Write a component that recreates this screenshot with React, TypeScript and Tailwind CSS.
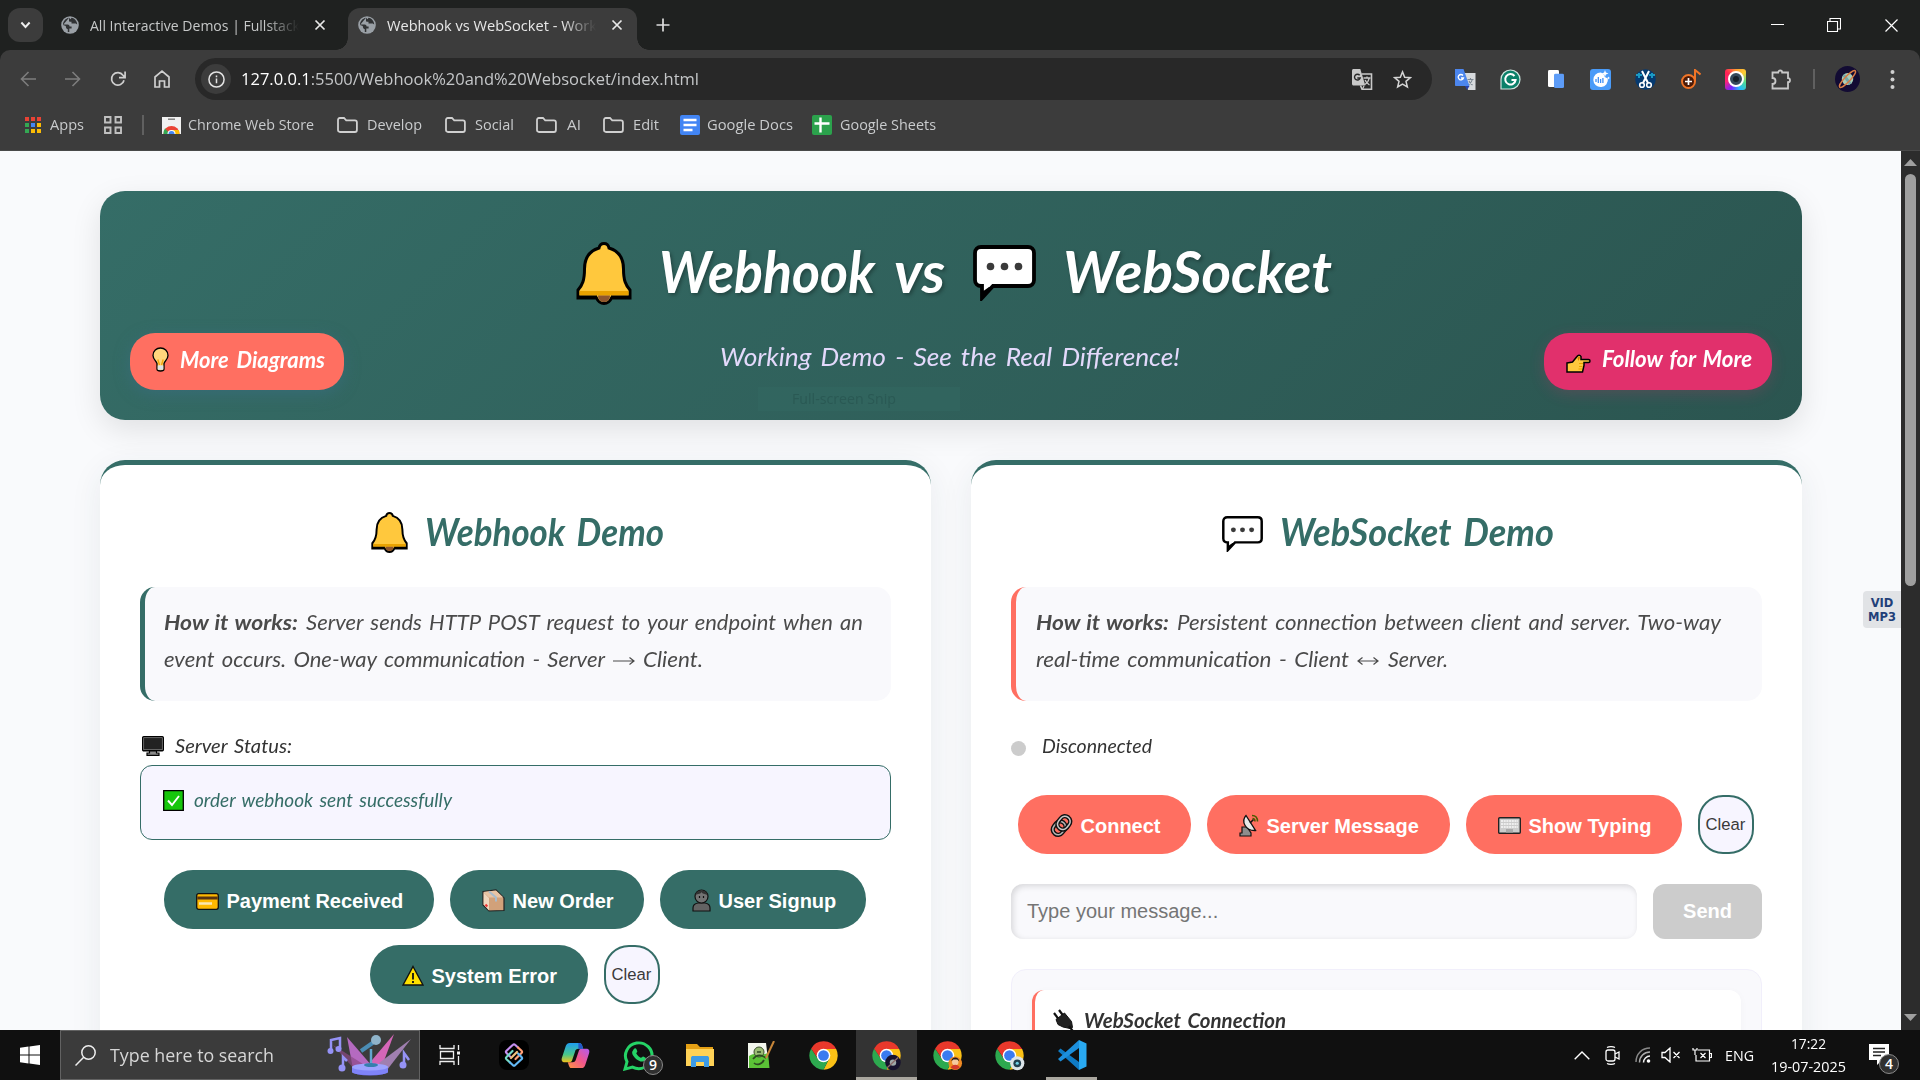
import { useLayoutEffect, useRef, useState } from "react";
import type { ReactNode } from "react";

const UI = "font-['Open_Sans','Noto_Sans',sans-serif]";
const HAND = "font-['Lato',sans-serif] italic";
const ARIAL = "font-['Liberation_Sans',Arial,sans-serif]";

/* Stretches a single line of text to the width of its box. */
function Fit({ className = "", children }: { className?: string; children: ReactNode }) {
  const box = useRef<HTMLSpanElement>(null);
  const text = useRef<HTMLSpanElement>(null);
  const [k, setK] = useState(1);
  useLayoutEffect(() => {
    if (box.current && text.current && text.current.offsetWidth) {
      setK(box.current.getBoundingClientRect().width / text.current.getBoundingClientRect().width);
    }
  }, []);
  return (
    <span ref={box} className={"block shrink-0 whitespace-nowrap " + className}>
      <span ref={text} className="inline-block origin-left" style={{ transform: `scaleX(${k})` }}>
        {children}
      </span>
    </span>
  );
}

function Svg({ box, className, children }: { box: string; className: string; children: ReactNode }) {
  return (
    <svg viewBox={box} className={"block shrink-0 " + className} fill="none" preserveAspectRatio="none">
      {children}
    </svg>
  );
}

const Globe = ({ className = "" }: { className?: string }) => (
  <Svg box="0 0 18 18" className={"h-[18px] w-[18px] " + className}>
    <circle cx="9" cy="9" r="8.8" fill="#9aa0a6" />
    <path d="M8 1.8C4.500 2.500 2 5.400 2 8.400h4.600c1.500 0 2 1 2 2h2v2.200H8.300v3.400c-.6.100-1 .1-1.500 0v-2.700c-1.800-.5-2-2.200-2-3.200L2 8.900M8 1.800v2.900c0 1.200 1.200 1.100 2.500 1.100v1.700h3.800c.9 0 1.500.6 1.900 1.300.1-3.300-2.400-6.500-5.700-7L9.500 3.200 8 1.800z" fill="#303234" />
  </Svg>
);
const Cross = ({ className = "" }: { className?: string }) => (
  <Svg box="0 0 12 12" className={"h-3 w-3 " + className}>
    <path d="M1.500 1.500l9 9m0-9l-9 9" stroke="#e8e8e8" strokeWidth="1.700" />
  </Svg>
);
const Bell = ({ className }: { className: string }) => (
  <Svg box="0 0 56 63" className={className}>
    <path d="M28 1.500c3 0 4.500 2 5 4.500C43 9 47.500 17 47.500 27c0 11 2 16 6.500 21v8H35.500c-1.500 3.500-4 5.500-7.500 5.500S22 59.500 20.500 56H2v-8c4.500-5 6.500-10 6.500-21C8.500 17 13 9 23 6c.5-2.500 2-4.500 5-4.500z" fill="#ffc83d" stroke="#000" strokeWidth="3" />
    <path d="M3.500 49h49v4.500h-49z" fill="#e9a200" />
    <path d="M3 53.500h18V56H3zM35 53.500h18V56H35z" fill="#000" />
    <path d="M22 53.500h12c0 4-2.500 6.500-6 6.500s-6-2.500-6-6.500z" fill="#8e562e" />
  </Svg>
);
const Bubble = ({ className }: { className: string }) => (
  <Svg box="0 0 63 56" className={className}>
    <path d="M8 2h47c3.500 0 6 2.500 6 6v27c0 3.500-2.500 6-6 6H20L9 53V41H8c-3.500 0-6-2.500-6-6V8c0-3.500 2.500-6 6-6z" fill="#fff" stroke="#000" strokeWidth="3.800" />
    <path d="M9 47v7l11-12h-4z" fill="#000" />
    <g fill="#3a3a3a"><circle cx="17.500" cy="21.500" r="3.800" /><circle cx="31.500" cy="21.500" r="3.800" /><circle cx="45.500" cy="21.500" r="3.800" /></g>
  </Svg>
);
const Chrome = ({ className = "", children }: { className?: string; children?: ReactNode }) => (
  <Svg box="0 0 48 48" className={"h-[31px] w-[31px] " + className}>
    <path d="M24 14H43.600A22 22 0 0 1 24 46L32.660 29z" fill="#fbc116" />
    <path d="M4.950 13A22 22 0 0 0 24 46L32.660 29 15.340 29z" fill="#2da94f" />
    <path d="M24 14H43.600A22 22 0 0 0 4.950 13L15.340 29z" fill="#e8382b" />
    <circle cx="24" cy="24" r="10.500" fill="#fff" />
    <circle cx="24" cy="24" r="8.300" fill="#3a7bf0" />
    {children}
  </Svg>
);
const Folder = ({ className = "" }: { className?: string }) => (
  <Svg box="0 0 21 16" className={"h-4 w-[21px] " + className}>
    <path d="M1 3c0-1.200.7-2 1.800-2H7l2.200 2.300h8.700c1.200 0 2 .8 2 2V13c0 1.200-.8 2-2 2H3c-1.200 0-2-.8-2-2z" stroke="#d0d0d0" strokeWidth="1.800" />
  </Svg>
);

function TabStrip() {
  return (
    <div className={"flex h-[50px] items-center bg-[#1f2120] text-[15px] leading-[20px] text-[#c6c8c8] " + UI}>
      <div className="ml-2 flex h-[34px] w-[35px] items-center justify-center rounded-[12px] bg-[#3c3c3c]">
        <Svg box="0 0 12 8" className="h-[8px] w-[11px]"><path d="M1.500 1.500L6 6l4.500-4.500" stroke="#eee" strokeWidth="2.200" /></Svg>
      </div>
      <Globe className="ml-[18px]" />
      <div className="ml-[11px] w-[209px] [mask-image:linear-gradient(to_right,#000_84%,transparent)]">
        <Fit className="w-[210px]">All Interactive Demos | Fullstack</Fit>
      </div>
      <Cross className="ml-[15px]" />
      <div className="relative ml-[22px] mt-2 flex h-[42px] w-[289px] items-center rounded-t-[12px] bg-[#3c3c3c] pb-2 text-[#e8e8e8]">
        <span className="absolute bottom-0 -left-3 h-3 w-3 bg-[radial-gradient(circle_at_0_0,transparent_11.500px,#3c3c3c_12px)]" />
        <span className="absolute -right-3 bottom-0 h-3 w-3 bg-[radial-gradient(circle_at_100%_0,transparent_11.500px,#3c3c3c_12px)]" />
        <Globe className="ml-[10px]" />
        <div className="ml-[11px] w-[209px] [mask-image:linear-gradient(to_right,#000_84%,transparent)]">
          <Fit className="w-[210px]">Webhook vs WebSocket - Work</Fit>
        </div>
        <Cross className="ml-[15px]" />
      </div>
      <Svg box="0 0 14 14" className="ml-[19px] h-[14px] w-[14px]"><path d="M7 .5v13M.5 7h13" stroke="#ddd" strokeWidth="1.700" /></Svg>
      <Svg box="0 0 13 13" className="ml-auto h-[13px] w-[13px]"><path d="M0 5.500h13" stroke="#fff" /></Svg>
      <Svg box="0 0 14 14" className="ml-[43px] h-[14px] w-[14px]"><path d="M.5 3.500h10v10H.5zM3 3.500V.5h10.500v10.500h-3" stroke="#fff" strokeWidth="1.100" /></Svg>
      <Svg box="0 0 13 13" className="mr-[22px] ml-[44px] h-[13px] w-[13px]"><path d="M.5.5l12 12m0-12l-12 12" stroke="#fff" strokeWidth="1.200" /></Svg>
    </div>
  );
}

function Toolbar() {
  return (
    <div className={"flex h-[58px] items-center text-[17px] " + UI}>
      <Svg box="0 0 16 16" className="ml-5 h-4 w-4"><path d="M16 8H1.500M8.500 1L1.500 8l7 7" stroke="#7d7d7d" strokeWidth="1.600" /></Svg>
      <Svg box="0 0 16 16" className="ml-[29px] h-4 w-4"><path d="M0 8h14.500M7.500 1l7 7-7 7" stroke="#7d7d7d" strokeWidth="1.600" /></Svg>
      <Svg box="0 0 16 16" className="ml-[29px] h-4 w-4"><path d="M14 9.200A6.300 6.300 0 1 1 13 4.200L15 6.500M15.100.500v6.200H9" stroke="#cfcfcf" strokeWidth="1.700" /></Svg>
      <Svg box="0 0 16 18" className="ml-[28px] h-[18px] w-4"><path d="M1 7l7-5.800L15 7v10h-4.500v-6h-5v6H1z" stroke="#cfcfcf" strokeWidth="1.700" /></Svg>
      <div className="ml-[25px] flex h-[42px] w-[1237px] items-center rounded-full bg-[#282828]">
        <div className="ml-[6px] flex h-[30px] w-[30px] items-center justify-center rounded-full bg-[#3c3c3c]">
          <Svg box="0 0 18 18" className="h-[17px] w-[17px]"><circle cx="9" cy="9" r="8" stroke="#e3e3e3" strokeWidth="1.600" /><path d="M9 8v5M9 4.800v1.900" stroke="#e3e3e3" strokeWidth="1.600" /></Svg>
        </div>
        <Fit className="ml-[10px] w-[458px] text-[#c4c6c8]"><span className="text-white">127.0.0.1</span>:5500/Webhook%20and%20Websocket/index.html</Fit>
        <Svg box="0 0 21 21" className="ml-auto h-[21px] w-[21px]">
          <path d="M9.500 5h10v15.200H10L8.500 16.500" stroke="#c8c8c8" strokeWidth="1.600" />
          <path d="M0 1.500C0 .7.700 0 1.500 0h6.800l5 16.500H1.500C.7 16.500 0 15.800 0 15z" fill="#c8c8c8" />
          <path d="M7.700 6.300A2.900 2.900 0 1 0 8.200 9H5.300" stroke="#282828" strokeWidth="1.400" />
          <path d="M11.500 9h7M15 7.500V9m2.200 0c-.6 3.200-2.600 5.500-4.400 6.500m.3-4.500c.8 2 2.600 4 4.400 5M12 17l-1.500 3" stroke="#c8c8c8" strokeWidth="1.300" />
        </Svg>
        <Svg box="0 0 20 20" className="mr-[20px] ml-[20px] h-[19px] w-[19px]"><path d="M10 2l2.300 5.600 6 .5-4.600 3.900 1.400 5.900L10 14.800l-5.100 3.100L6.300 12 1.700 8.100l6-.5z" stroke="#d4d4d4" strokeWidth="1.600" /></Svg>
      </div>
      <Svg box="0 0 21 21" className="ml-[23px] h-[21px] w-[21px]">
        <path d="M8 4h12.500v17H13z" fill="#d7dadd" /><path d="M0 0h8.500l6 17H1c-.6 0-1-.4-1-1z" fill="#4c86ee" /><path d="M10 17h4.500L12 21z" fill="#2740a8" />
        <path d="M8 6.500A2.700 2.700 0 1 0 8.500 9H6" stroke="#fff" strokeWidth="1.300" /><path d="M12.500 10.500h6M15.500 9v1.500m1.800 0c-.5 2.500-2 4-3.300 5m0-3.500c.8 1.800 2 3 3.500 4" stroke="#7c8792" strokeWidth="1.100" />
      </Svg>
      <Svg box="0 0 21 21" className="ml-[24px] h-[21px] w-[21px]">
        <path d="M1 20V10.500A9.500 9.500 0 1 1 10.500 20z" fill="#0b8069" stroke="#cfe5df" strokeWidth="1.200" /><path d="M14.500 7A5.200 5.200 0 1 0 15.600 11H11.500" stroke="#fff" strokeWidth="2" />
      </Svg>
      <Svg box="0 0 16 20" className="ml-[27px] h-[19px] w-4"><rect width="11" height="18" rx="1.500" fill="#fff" /><rect x="6" y="4" width="10" height="15" rx="1.500" fill="#5d9cf7" /></Svg>
      <Svg box="0 0 21 21" className="ml-[26px] h-[21px] w-[21px]">
        <rect width="21" height="21" rx="3" fill="#4a9bf8" /><path d="M11 3.500a7.300 7.300 0 1 0 6.800 6l-3-1.500-1-2.500z" fill="#fff" /><path d="M6 10v3m2.300-5v6m2.300-4v4m2.300-5v5" stroke="#3f8ff5" strokeWidth="1.300" /><path d="M15 1l.9 2.600 2.600.9-2.600.9L15 8l-.9-2.600-2.600-.9 2.600-.9zM18.500 7.500l.5 1 1 .5-1 .5-.5 1-.5-1-1-.5 1-.5z" fill="#fff" />
      </Svg>
      <Svg box="0 0 21 21" className="ml-[24px] h-[21px] w-[21px]">
        <circle cx="10.500" cy="10.500" r="10.300" fill="#063a70" /><path d="M2 7v-2m2 4V4m2 3V5m9 2V5m2 4V4m2 3V5" stroke="#23c3e8" strokeWidth="1.400" /><path d="M7 2l6 12M14 2L8 14" stroke="#fff" strokeWidth="2" /><circle cx="7" cy="16" r="2.300" stroke="#fff" strokeWidth="1.600" /><circle cx="14" cy="16" r="2.300" stroke="#fff" strokeWidth="1.600" />
      </Svg>
      <Svg box="0 0 20 20" className="ml-[25px] h-5 w-5">
        <circle cx="7.500" cy="12.500" r="6.500" fill="#4a1a08" stroke="#f07427" strokeWidth="2" /><path d="M14 12V1l5.500 4.500" stroke="#f07427" strokeWidth="2" /><path d="M7.500 9v7M4 12.500h7" stroke="#fff" strokeWidth="1.700" />
      </Svg>
      <div className="ml-6 flex h-[21px] w-[21px] items-center justify-center rounded-[3px] bg-[conic-gradient(#f93,#fc3,#5d8,#2bf,#72f,#f27,#f25,#f93)]">
        <span className="flex h-[16px] w-[16px] items-center justify-center rounded-full border-2 border-white bg-[#34495c]"><span className="h-[6px] w-[6px] rounded-full bg-[#15202a]" /></span>
      </div>
      <Svg box="0 0 21 21" className="ml-[25px] h-[21px] w-[21px]"><path d="M2 3.500h5.200a2 2 0 1 1 4 0H17v5.700a2 2 0 1 1 0 4v6.300H1.500v-4.500a3 3 0 0 0 0-6V3.500z" stroke="#c8c8c8" strokeWidth="1.800" /></Svg>
      <span className="ml-[21px] h-5 w-[2px] bg-[#606060]" />
      <Svg box="0 0 26 26" className="ml-[20px] h-[26px] w-[25px]">
        <circle cx="13" cy="13" r="13" fill="#120b33" /><circle cx="13" cy="13" r="6" fill="#a9cdb8" /><path d="M9 9l7 9" stroke="#73a7aa" strokeWidth="3" /><ellipse cx="13" cy="13" rx="11.500" ry="2.800" transform="rotate(-45 13 13)" stroke="#d97b44" strokeWidth="1.500" />
      </Svg>
      <Svg box="0 0 5 21" className="ml-[30px] h-[21px] w-[5px]"><g fill="#d0d0d0"><circle cx="2.500" cy="3" r="2" /><circle cx="2.500" cy="10.500" r="2" /><circle cx="2.500" cy="18" r="2" /></g></Svg>
    </div>
  );
}

function Bookmarks() {
  return (
    <div className={"flex h-[34px] items-center text-[15px] leading-[20px] text-[#c9cbcd] " + UI}>
      <div className="ml-[25px] grid w-4 grid-cols-3 gap-[2px]">
        {["bg-[#e94335]", "bg-[#e94335]", "bg-[#e94335]", "bg-[#34a853]", "bg-[#4285f4]", "bg-[#fbbc05]", "bg-[#34a853]", "bg-[#fbbc05]", "bg-[#fbbc05]"].map((c, i) => (
          <span key={i} className={"h-[4px] w-[4px] " + c} />
        ))}
      </div>
      <Fit className="ml-[9px] w-[34px] pb-[2px]">Apps</Fit>
      <Svg box="0 0 18 18" className="ml-[20px] h-[18px] w-[18px]"><path d="M1 1h5.500v5.500H1zM11.500 1H17v5.500h-5.500zM1 11.500h5.500V17H1zM11.500 11.500H17V17h-5.500z" stroke="#c0c0c0" strokeWidth="1.900" /></Svg>
      <span className="ml-[20px] h-5 w-[2px] bg-[#606060]" />
      <Svg box="0 0 19 17" className="ml-[18px] h-[17px] w-[19px]">
        <path d="M0 0h19v17H0z" fill="#f1f1f1" /><path d="M6 2.200h7" stroke="#777" strokeWidth="1.400" /><path d="M1.500 17a8 8 0 0 1 16 0z" fill="#ea4335" /><path d="M1.500 17A8 8 0 0 1 3 11.500L8 17z" fill="#34a853" /><path d="M17.500 17a8 8 0 0 0-.9-4H10v4z" fill="#fbbc05" /><path d="M5.500 17a4 4 0 0 1 8 0z" fill="#fff" /><path d="M6.500 17a3 3 0 0 1 6 0z" fill="#4285f4" />
      </Svg>
      <Fit className="ml-[7px] w-[126px] pb-[2px]">Chrome Web Store</Fit>
      <Folder className="ml-[23px]" />
      <Fit className="ml-[9px] w-[55px] pb-[2px]">Develop</Fit>
      <Folder className="ml-[23px]" />
      <Fit className="ml-[9px] w-[39px] pb-[2px]">Social</Fit>
      <Folder className="ml-[22px]" />
      <Fit className="ml-[10px] w-[14px] pb-[2px]">AI</Fit>
      <Folder className="ml-[22px]" />
      <Fit className="ml-[9px] w-[26px] pb-[2px]">Edit</Fit>
      <Svg box="0 0 20 20" className="ml-[21px] h-5 w-5"><rect width="20" height="20" rx="2" fill="#4285f4" /><path d="M3.500 5h13M3.500 10h13M3.500 15h9" stroke="#fff" strokeWidth="2.400" /></Svg>
      <Fit className="ml-[7px] w-[86px] pb-[2px]">Google Docs</Fit>
      <Svg box="0 0 20 20" className="ml-[19px] h-5 w-5"><rect width="20" height="20" rx="2" fill="#2ba24c" /><path d="M8.500 2.500v15M2.500 8.500h15" stroke="#fff" strokeWidth="2.400" /></Svg>
      <Fit className="ml-[8px] w-[96px] pb-[2px]">Google Sheets</Fit>
    </div>
  );
}

function Banner() {
  return (
    <header className={"relative flex h-[229px] flex-col rounded-[25px] bg-linear-135 from-[#356d67] to-[#2b5550] pt-[40px] text-white shadow-[0_10px_30px_rgba(0,0,0,0.1)] " + HAND}>
      <h1 className="flex h-[84px] items-center pl-[476px] text-[58px] leading-[60px] font-bold [text-shadow:2px_2px_4px_rgba(0,0,0,0.3)]">
        <Bell className="h-[63px] w-[56px]" />
        <Fit className="ml-[27px] w-[216px] pb-[5px]">Webhook</Fit>
        <Fit className="ml-[19px] w-[51px] pb-[5px]">vs</Fit>
        <Bubble className="ml-[28px] h-[56px] w-[63px]" />
        <Fit className="ml-[27px] w-[269px] pb-[5px]">WebSocket</Fit>
      </h1>
      <div className="mt-[18px] flex h-[57px] items-center px-[30px]">
        <div className="flex h-[57px] w-[214px] items-center rounded-[25px] bg-[#ff6f61] pb-[4px] text-[22.500px] leading-[26px] font-bold shadow-[0_4px_15px_rgba(59,110,130,0.6)]">
          <Svg box="0 0 17 25" className="ml-[22px] h-[25px] w-[17px]">
            <path d="M8.500 1C4.500 1 1 4 1 8.500c0 3.500 3 5 4 8v5.500c0 1.200 1.500 2 3.500 2s3.500-.8 3.500-2v-5.500c1-3 4-4.500 4-8C16 4 12.500 1 8.500 1z" fill="#ffd67d" stroke="#000" strokeWidth="1.300" />
            <path d="M5.800 12.500l1.700 5.500m3.700-5.500L9.500 18" stroke="#f5a50a" strokeWidth="1.400" /><path d="M5.700 18.500h5.600v4.200H5.700z" fill="#dfe3e6" />
          </Svg>
          <Fit className="ml-[11px] w-[145px] [word-spacing:3px]">More Diagrams</Fit>
        </div>
        <Fit className="ml-[376px] w-[460px] pb-[12px] text-[26px] leading-[30px] text-[#e3d9fb] [word-spacing:3px]">Working Demo - See the Real Difference!</Fit>
        <div className="ml-[364px] flex h-[57px] w-[228px] items-center rounded-[25px] bg-[#e1306c] text-[22.500px] leading-[26px] font-bold shadow-[0_4px_15px_rgba(225,48,108,0.2)]">
          <Svg box="0 0 25 19" className="mt-[3px] ml-[22px] h-[19px] w-[25px]">
            <path d="M1 9l5.500-1L11 2.500c1-1.500 3-1.800 4 0V5.500h7.500c2 0 2 3 0 3H18v3l-1.500 6.500H1z" fill="#ffc83d" stroke="#000" strokeWidth="1.500" /><path d="M11.500 4c1-1.500 2.300-1.500 2.500-.5L12.500 7z" fill="#d67d00" /><path d="M13 9.500h4M13 12.500h3.500M12.500 15h3.500" stroke="#e9a200" />
          </Svg>
          <Fit className="ml-[11px] w-[150px] pb-[5px] [word-spacing:2px]">Follow for More</Fit>
        </div>
      </div>
      <div className={"absolute top-[196px] left-[658px] h-[24px] w-[202px] bg-[#356b65]/40 pl-[34px] text-[14px] leading-[24px] text-[#2a5954] not-italic " + UI}>
        <Fit className="w-[104px]">Full-screen Snip</Fit>
      </div>
    </header>
  );
}

function Card({ children }: { children: ReactNode }) {
  return (
    <section className="h-[900px] w-[831px] shrink-0 rounded-[25px] border-t-[5px] border-[#356d67] bg-white px-[40px] pt-[40px] shadow-[0_8px_32px_rgba(40,60,80,0.08)]">
      {children}
    </section>
  );
}

function Pill({ className, children }: { className: string; children: ReactNode }) {
  return (
    <button className={"flex h-[59px] shrink-0 items-center rounded-[29px] pt-[2px] text-[20px] font-bold whitespace-nowrap text-white " + ARIAL + " " + className}>
      {children}
    </button>
  );
}

const Clear = () => (
  <button className={"flex h-[59px] w-[56px] shrink-0 items-center justify-center rounded-[25px] border-2 border-[#356d67] bg-[#f7f5ff] text-[16.670px] text-[#3a3a3a] " + ARIAL}>Clear</button>
);

function WebhookCard() {
  return (
    <Card>
      <h2 className={"flex h-[56px] items-center pl-[231px] text-[38px] leading-[44px] font-bold text-[#356d67] " + HAND}>
        <Bell className="mb-[2px] h-[41px] w-[37px]" />
        <Fit className="ml-[17px] w-[239px] pb-[4px] [word-spacing:4px]">Webhook Demo</Fit>
      </h2>
      <div className={"mt-[26px] h-[114px] w-[751px] rounded-[15px] border-l-[5px] border-[#356d67] bg-[#f9f9fc] pt-[17px] pl-[19px] text-[21.500px] leading-[37px] text-[#4a4a4a] " + HAND}>
        <div className="flex">
          <Fit className="w-[134px] font-bold [word-spacing:1px]">How it works:</Fit>
          <Fit className="ml-[8px] w-[557px] [word-spacing:2px]">Server sends HTTP POST request to your endpoint when an</Fit>
        </div>
        <div className="flex">
          <Fit className="w-[441px] [word-spacing:2px]">event occurs. One-way communication - Server</Fit>
          <Svg box="0 0 22 10" className="mt-[15px] ml-[8px] h-[10px] w-[22px]"><path d="M0 5h21M16.500 1.500L21 5l-4.500 3.500" stroke="#4a4a4a" strokeWidth="1.200" /></Svg>
          <Fit className="ml-[8px] w-[60px]">Client.</Fit>
        </div>
      </div>
      <div className={"mt-[27px] flex h-[37px] items-center pl-[2px] text-[19px] leading-[24px] text-[#333] " + HAND}>
        <Svg box="0 0 22 20" className="-mt-[1px] h-[20px] w-[22px]"><rect x=".7" y=".7" width="20.600" height="14" rx="1" fill="#222" stroke="#000" strokeWidth="1.400" /><rect x="1.700" y="1.700" width="18.600" height="12" stroke="#888" strokeWidth=".7" /><path d="M7.500 15h7v2h2.500v2.300H5V17h2.500z" fill="#8a8a8a" stroke="#000" strokeWidth="1.200" /></Svg>
        <Fit className="ml-[11px] w-[117px] pb-[2px] [word-spacing:2px]">Server Status:</Fit>
      </div>
      <div className={"flex h-[75px] w-[751px] items-center rounded-[12px] border border-[#356d67] bg-[#f7f5ff] pb-[5px] pl-[22px] text-[19px] leading-[24px] text-[#356d67] " + HAND}>
        <Svg box="0 0 21 21" className="h-[21px] w-[21px]"><path d="M.7.7h19.600v19.600H.700z" fill="#16c60c" stroke="#000" strokeWidth="1.300" /><path d="M5 10.500l4 4.500 7-9" stroke="#fff" strokeWidth="1.900" /></Svg>
        <Fit className="ml-[10px] w-[258px] [word-spacing:2px]">order webhook sent successfully</Fit>
      </div>
      <div className="mt-[30px] flex flex-wrap justify-center gap-4 pr-[2px]">
        <Pill className="w-[270px] bg-[#356d67] pl-[32px]">
          <Svg box="0 0 23 17" className="mt-[1px] mr-[8px] h-[17px] w-[23px]"><rect x=".7" y=".7" width="21.600" height="15.600" rx="2" fill="#ffb900" stroke="#111" strokeWidth="1.300" /><path d="M1.300 3.500h20.400v3H1.300z" fill="#5a3411" /><path d="M3 10.500h13" stroke="#fbe7b0" strokeWidth="2.500" /></Svg>
          Payment Received
        </Pill>
        <Pill className="w-[194px] bg-[#356d67] pl-[32px]">
          <Svg box="0 0 23 23" className="mr-[8px] h-[23px] w-[23px]"><path d="M1 2.500L14 1l8 8v12.500L7 22l-6-6z" fill="#d1a17a" stroke="#222" strokeWidth="1.200" /><path d="M1.500 3L7 8.500h14.500L14 1.500z" fill="#e8c4a4" /><path d="M1.600 3.500L7 9v12.500l-5.400-6z" fill="#efd6bd" /><path d="M7 2.500l7 6v4" stroke="#a9bccb" strokeWidth="2" /><path d="M3.500 15.500l1.800 2" stroke="#e33" strokeWidth="2" /></Svg>
          New Order
        </Pill>
        <Pill className="w-[206px] bg-[#356d67] pl-[32px]">
          <Svg box="0 0 19 23" className="mr-[8px] h-[23px] w-[19px]"><path d="M1 22v-3c0-3 2-4.500 5-5h7c3 .5 5 2 5 5v3z" fill="#636363" stroke="#111" strokeWidth="1.200" /><circle cx="9.500" cy="7.500" r="6.500" fill="#737373" stroke="#111" strokeWidth="1.200" /><path d="M3.300 7c1-3 5-1 6.200-4C11 6 14 4 15.700 7 15 2 12 1.500 9.500 1.500S4 2 3.300 7z" fill="#333" /><path d="M7.500 7v2m4-2v2" stroke="#111" strokeWidth="1.200" /></Svg>
          User Signup
        </Pill>
        <Pill className="w-[218px] bg-[#356d67] pl-[32px]">
          <Svg box="0 0 22 21" className="mr-[8px] h-[21px] w-[22px]"><path d="M11 1.500L21 20H1z" fill="#ffe000" stroke="#111" strokeWidth="1.400" /><path d="M11 8v6.500m0 1.500v2" stroke="#111" strokeWidth="1.800" /></Svg>
          System Error
        </Pill>
        <Clear />
      </div>
    </Card>
  );
}

function SocketCard() {
  return (
    <Card>
      <h2 className={"flex h-[56px] items-center pl-[211px] text-[38px] leading-[44px] font-bold text-[#356d67] " + HAND}>
        <Bubble className="mt-[1px] h-[36px] w-[41px]" />
        <Fit className="ml-[17px] w-[274px] pb-[4px] [word-spacing:4px]">WebSocket Demo</Fit>
      </h2>
      <div className={"mt-[26px] h-[114px] w-[751px] rounded-[15px] border-l-[5px] border-[#ff6f61] bg-[#f9f9fc] pt-[17px] pl-[20px] text-[21.500px] leading-[37px] text-[#4a4a4a] " + HAND}>
        <div className="flex">
          <Fit className="w-[133px] font-bold [word-spacing:1px]">How it works:</Fit>
          <Fit className="ml-[8px] w-[544px] [word-spacing:2px]">Persistent connection between client and server. Two-way</Fit>
        </div>
        <div className="flex">
          <Fit className="w-[313px] [word-spacing:2px]">real-time communication - Client</Fit>
          <Svg box="0 0 22 10" className="mt-[15px] ml-[8px] h-[10px] w-[22px]"><path d="M1 5h20M16.500 1.500L21 5l-4.500 3.500M5.500 1.500L1 5l4.500 3.500" stroke="#4a4a4a" strokeWidth="1.200" /></Svg>
          <Fit className="ml-[9px] w-[60px]">Server.</Fit>
        </div>
      </div>
      <div className={"mt-[27px] flex h-[37px] items-center text-[19px] leading-[24px] text-[#333] " + HAND}>
        <span className="mt-[3px] h-[15px] w-[15px] rounded-full bg-[#ccc]" />
        <Fit className="ml-[16px] w-[110px] pb-[2px]">Disconnected</Fit>
      </div>
      <div className="mt-[30px] flex justify-center gap-4 pr-[2px]">
        <Pill className="w-[173px] bg-[#ff6f61] pl-[32px]">
          <Svg box="0 0 23 23" className="mr-[8px] h-[23px] w-[23px]"><g transform="rotate(-52 11.500 11.500)"><rect x="1" y="6" width="14" height="10.500" rx="5.200" stroke="#111" strokeWidth="4.400" /><rect x="1" y="6" width="14" height="10.500" rx="5.200" stroke="#b5b5b5" strokeWidth="1.500" /><rect x="8" y="6.500" width="14" height="10.500" rx="5.200" stroke="#111" strokeWidth="4.400" /><rect x="8" y="6.500" width="14" height="10.500" rx="5.200" stroke="#c9c9c9" strokeWidth="1.500" /></g></Svg>
          Connect
        </Pill>
        <Pill className="w-[243px] bg-[#ff6f61] pl-[32px]">
          <Svg box="0 0 20 23" className="mr-[8px] h-[23px] w-[20px]"><path d="M3 13h5l4 6v3H1v-3h2z" fill="#8d8d8d" stroke="#111" strokeWidth="1.200" /><path d="M7 1.500C2 7 6 17 16.500 16.500z" fill="#e8e8e8" stroke="#111" strokeWidth="1.300" /><path d="M11 9l3.500-3.500" stroke="#111" strokeWidth="1.600" /><path d="M13 1.500c3.500 0 5.500 2.500 5.500 6M13.500 4.500c1.500 0 2.500 1 2.500 3" stroke="#4b5a00" strokeWidth="1.500" /></Svg>
          Server Message
        </Pill>
        <Pill className="w-[216px] bg-[#ff6f61] pl-[32px]">
          <Svg box="0 0 23 17" className="mr-[8px] h-[17px] w-[23px]"><rect x=".7" y=".7" width="21.600" height="15.600" rx="1" fill="#ccc" stroke="#222" strokeWidth="1.400" /><path d="M3 4h17M3 7h17M3 10h17" stroke="#eee" strokeWidth="1.800" strokeDasharray="2 .7" /><path d="M8 12h7v3.500H8z" fill="#aaa" /></Svg>
          Show Typing
        </Pill>
        <Clear />
      </div>
      <div className={"mt-[30px] flex h-[55px] gap-4 text-[20px] " + ARIAL}>
        <div className="flex w-[626px] items-center rounded-[12px] bg-[#f9f9fc] pb-[2px] pl-[16px] text-[#757575] shadow-[inset_2px_2px_6px_rgba(0,0,0,0.14)]">Type your message...</div>
        <button className="w-[109px] rounded-[12px] bg-[#ccc] pb-[2px] font-bold text-white">Send</button>
      </div>
      <div className="mt-[30px] h-[300px] w-[751px] rounded-[15px] border border-[#f1effb] bg-[#f9f9fc] px-[20px] pt-[20px]">
        <div className={"flex h-[200px] rounded-[12px] border-l-[3px] border-[#ff6f61] bg-white pt-[17px] pl-[18px] text-[20px] leading-[26px] font-bold text-[#333] shadow-[0_2px_8px_rgba(0,0,0,0.03)] " + HAND}>
          <Svg box="0 0 22 24" className="mt-[2px] h-[24px] w-[22px]"><path d="M1 4l4.500 6M6 1l4.500 6" stroke="#111" strokeWidth="2.200" /><path d="M3 10.500l8.500-6.500 7 8.500 1 6-2.500 1-7-1.500-5-2.500z" fill="#222" stroke="#111" strokeWidth="1" /><path d="M16 17l4.500 6" stroke="#111" strokeWidth="2.200" /></Svg>
          <Fit className="ml-[9px] w-[202px] [word-spacing:2px]">WebSocket Connection</Fit>
        </div>
      </div>
    </Card>
  );
}

function Taskbar() {
  return (
    <footer className={"flex h-[50px] items-center bg-[#101010] text-white " + UI}>
      <Svg box="0 0 20 20" className="ml-5 h-5 w-5"><path d="M0 2.800L8.500 1.600v8H0zM9.500 1.400L20 0v9.600H9.500zM0 10.500h8.500v8L0 17.200zM9.500 10.500H20V20L9.500 18.600z" fill="#fff" /></Svg>
      <div className="ml-5 flex h-[50px] w-[360px] items-center border border-[#626262] bg-[#3b3b3b] text-[18px] leading-[24px] text-[#d6d6d6]">
        <Svg box="0 0 21 21" className="ml-[14px] h-[21px] w-[21px]"><circle cx="13.500" cy="7.500" r="6.700" stroke="#eee" strokeWidth="1.500" /><path d="M8.700 12.300L.5 20.500" stroke="#eee" strokeWidth="1.500" /></Svg>
        <Fit className="ml-[14px] w-[164px]">Type here to search</Fit>
        <Svg box="0 0 85 42" className="ml-[53px] h-[42px] w-[85px]">
          <path d="M20 3l25 29-19 3z" fill="#b56ac0" /><path d="M67 0L40 32l14 3z" fill="#d566b8" /><path d="M84 5L52 29l8 7z" fill="#a07fb0" /><path d="M6 11l30 19-8 6z" fill="#8c4a86" opacity=".7" />
          <ellipse cx="43" cy="37" rx="18" ry="4.500" fill="#6f6af0" /><path d="M25 33v5c0 4 36 4 36 0v-5z" fill="#7f83f8" /><ellipse cx="43" cy="33" rx="18" ry="3.500" fill="#9da3ff" />
          <path d="M44 31V15" stroke="#63a7cf" strokeWidth="2.500" /><ellipse cx="44" cy="31" rx="7" ry="2" fill="#357fae" /><path d="M34 17l13-9" stroke="#4b8db5" strokeWidth="4" /><circle cx="49" cy="6" r="5" fill="#8fb4ca" />
          <path d="M4 17V6l9-2v11M16 34V23l4 4M77 31V19l5 7" stroke="#9592f5" strokeWidth="2.500" /><g fill="#9592f5"><circle cx="3.500" cy="17" r="3" /><circle cx="11.500" cy="15" r="3" /><circle cx="15" cy="34" r="3.500" /><circle cx="76" cy="31" r="3.500" /></g>
        </Svg>
      </div>
      <Svg box="0 0 21 20" className="ml-[19px] h-5 w-[21px]"><path d="M1 0v3.500h14V0M1 20v-3.500h14V20M1.500 6.500h13v7h-13zM19.500 0v5m0 6v9" stroke="#eee" strokeWidth="1.300" /><path d="M18 6.500h3v3h-3z" fill="#eee" /></Svg>
      <Svg box="0 0 30 30" className="ml-[39px] h-[30px] w-[30px]"><rect width="30" height="30" rx="8" fill="#000" /><g strokeWidth="2.200" strokeLinejoin="round" strokeLinecap="round"><path d="M11 16.500L7.500 13c-.8-.8-.8-1.500 0-2.300L14 4.800c.7-.7 1.300-.7 2 0L19 7.500" stroke="#c58ff0" /><path d="M19 7.500l3.500 3.300c.8.800.8 1.500 0 2.200L16.500 19" stroke="#ff9d76" /><path d="M13.500 11L7.500 17c-.8.700-.8 1.400 0 2.200l3.500 3.300" stroke="#74d9c8" /><path d="M19 13.500l3.500 3.500c.8.800.8 1.500 0 2.300L16 25.200c-.7.700-1.300.7-2 0l-3-2.700" stroke="#62b8f5" /><path d="M12 18l6-6" stroke="#f2c27f" /></g></Svg>
      <svg viewBox="0 0 30 28" className="ml-[32px] block h-[27px] w-[29px]">
        <defs>
          <linearGradient id="cpA" x1="0" y1="0" x2="0" y2="1"><stop stopColor="#1f9df0" /><stop offset=".6" stopColor="#49c78a" /><stop offset="1" stopColor="#f2c21a" /></linearGradient>
          <linearGradient id="cpB" x1="1" y1="0" x2="0" y2="1"><stop stopColor="#b15bf0" /><stop offset=".5" stopColor="#f2578c" /><stop offset="1" stopColor="#ff9440" /></linearGradient>
        </defs>
        <path d="M9 1h10c2 0 2.500 1.500 3 3l1 3h-5c-2 0-3 1-3.500 3l-3 9c-.5 1.500-1.500 2-3 2H4C1 21 0 19 1 16L5 4c.7-2 2-3 4-3z" fill="url(#cpA)" />
        <path d="M21 27H11c-2 0-2.500-1.500-3-3l-1-3h5c2 0 3-1 3.500-3l3-9c.5-1.500 1.500-2 3-2H26c3 0 4 2 3 5l-4 12c-.7 2-2 3-4 3z" fill="url(#cpB)" />
        <path d="M18 1c2.500 0 3.500 1 4 3l1 3h-5z" fill="#2456c8" />
      </svg>
      <div className="relative ml-[33px] h-[31px] w-[32px]">
        <Svg box="0 0 32 32" className="h-[31px] w-[32px]"><path d="M2 30l2-7.500A13.300 13.300 0 1 1 9.500 28z" stroke="#25d366" strokeWidth="3" /><path d="M11 9c1-1 2-.7 2.500.5l.8 2c.3.800-1.300 1.800-1 2.500 1 2 2.500 3.500 4.500 4.300.8.200 1.700-1.600 2.400-1.300l2.300 1.200c1 .6.500 2.300-.5 3.300C17 25 8 16 9.200 12z" fill="#25d366" /></Svg>
        <span className="absolute top-[15px] left-[20px] flex h-[20px] w-[20px] items-center justify-center rounded-full border border-[#8a8a8a] bg-[#303030] text-[14px] leading-none font-semibold">9</span>
      </div>
      <Svg box="0 0 28 24" className="ml-[31px] h-[24px] w-[28px]"><path d="M0 1h11l3 3h13v6H0z" fill="#e5a014" /><path d="M0 6h28v17H0z" fill="#ffd257" /><path d="M5 24V15c0-1.500 1-2 2-2h14c1 0 2 .5 2 2v9h-5v-5h-8v5z" fill="#3d9be6" /></Svg>
      <Svg box="0 0 28 28" className="ml-[33px] h-[28px] w-[28px]"><path d="M1 2h18l3 25H1z" fill="#f3f6ed" /><path d="M2 15c6-4 12 0 19-3l1.500 15H2z" fill="#5bc236" /><circle cx="12" cy="11" r="5" fill="#9bbd74" stroke="#3b4f2c" /><path d="M6 18c4-5 9-4 13-1m-12 5c3 3 8 1 10-3M10 11h4" stroke="#2c4a20" strokeWidth="1.700" /><path d="M27 0l-8 17" stroke="#c78639" strokeWidth="2" /></Svg>
      <Chrome className="ml-[33px]" />
      <div className="ml-[17px] flex h-[50px] w-[61px] items-center justify-center border-b-[3px] border-[#aaa79f] bg-[#333] pt-[3px]">
        <Chrome><circle cx="34" cy="35" r="12" fill="#17122e" /><circle cx="34" cy="35" r="5" fill="#9fa8a8" /><path d="M25 43l17-16" stroke="#8d6a6a" strokeWidth="2" /></Chrome>
      </div>
      <Chrome className="ml-[15px]"><circle cx="36" cy="36" r="10.500" fill="#ef8a23" /><circle cx="36" cy="34" r="5" fill="#f5c9a0" /><path d="M30 33c0-8 12-8 12 0l-3-3h-6z" fill="#251a18" /><path d="M29 43c2-6 12-6 14 0l-7 3z" fill="#d4372c" /></Chrome>
      <Chrome className="ml-[31px]"><circle cx="36" cy="36" r="11" fill="#dde5e9" /><circle cx="36" cy="36" r="6" fill="#22404f" /><circle cx="36" cy="36" r="2.500" fill="#6fd0e6" /></Chrome>
      <div className="ml-[21px] flex h-[50px] w-[51px] items-center justify-center border-b-[3px] border-[#aaa79f] pt-[3px]">
        <Svg box="0 0 30 30" className="h-[30px] w-[30px]"><path d="M22 0v30L1 11l2.500-2.500L22 22z" fill="#0f7bc4" /><path d="M22 0L1 19l2.500 2.500L22 8z" fill="#1c8fdc" /><path d="M22 0l7.500 3.500v23L22 30z" fill="#29a9f2" /></Svg>
      </div>
      <Svg box="0 0 16 9" className="ml-auto h-[9px] w-4"><path d="M.7 8.300L8 1l7.300 7.300" stroke="#fff" strokeWidth="1.400" /></Svg>
      <Svg box="0 0 15 19" className="ml-[15px] h-[19px] w-[15px]"><rect x="1" y="4" width="9" height="11" rx="2" stroke="#fff" strokeWidth="1.300" /><path d="M10 8l4-2v7l-4-2M2 1.500C4 .4 8 .4 10 1.500M2 17.500c2 1.100 6 1.100 8 0" stroke="#fff" strokeWidth="1.300" /></Svg>
      <Svg box="0 0 16 16" className="ml-[15px] h-4 w-4"><g stroke="#aaa" strokeWidth="1.500"><path d="M1 15C1 7 7 1 15 1" stroke="#888" /><path d="M4.500 15.500C4.500 9.500 9 5 15 5" /><path d="M8.500 15.500c0-3.500 3-6.500 6.500-6.500" stroke="#eee" /></g><circle cx="13.500" cy="14" r="1.800" fill="#fff" /></Svg>
      <Svg box="0 0 20 16" className="ml-[10px] h-4 w-5"><path d="M1 5.500h3l5-4.500v14l-5-4.500H1zM12.500 5l6 6m0-6l-6 6" stroke="#fff" strokeWidth="1.300" /></Svg>
      <Svg box="0 0 20 16" className="ml-[11px] h-4 w-5"><path d="M6 3h11.500v11H4V8M17.500 6.500h2v4h-2M8.500 6l5 5m0-5l-5 5M1 1v2h4V1M3 3v5" stroke="#fff" strokeWidth="1.200" /></Svg>
      <Fit className="ml-[13px] w-[29px] text-[15px]">ENG</Fit>
      <div className="ml-[17px] flex w-[75px] flex-col items-center text-[15px] leading-[23px]">
        <Fit className="w-[35px]">17:22</Fit>
        <Fit className="w-[75px]">19-07-2025</Fit>
      </div>
      <div className="relative mr-[30px] ml-[23px] h-[22px] w-[21px]">
        <Svg box="0 0 21 22" className="h-[22px] w-[21px]"><path d="M0 0h20v16h-7l-5 5v-5H0z" fill="#fff" /><path d="M4 4.500h12M4 8h12M4 11.500h8" stroke="#222" strokeWidth="1.300" /></Svg>
        <span className="absolute top-[10px] left-[10px] flex h-[20px] w-[20px] items-center justify-center rounded-full border border-[#8a8a8a] bg-[#303030] text-[14px] leading-none font-semibold">4</span>
      </div>
    </footer>
  );
}

export default function App() {
  return (
    <div className="flex h-[1080px] w-[1920px] flex-col overflow-hidden bg-[#f9fafc]">
      <TabStrip />
      <div className="h-[101px] bg-[#1f2120]">
        <div className="h-[101px] rounded-t-[10px] border-b border-[#494949] bg-[#3c3c3c]">
          <Toolbar />
          <Bookmarks />
        </div>
      </div>
      <div className="flex h-[879px] overflow-hidden">
        <main className="relative h-[879px] w-[1901px] overflow-hidden px-[100px] pt-[40px] pr-[99px]">
          <Banner />
          <div className="mt-[40px] flex gap-[40px]">
            <WebhookCard />
            <SocketCard />
          </div>
          <div className="absolute top-[440px] right-0 flex h-[37px] w-[38px] flex-col items-center justify-center rounded-l-[4px] bg-[#e1e3e6] font-['DejaVu_Sans',sans-serif] text-[11.500px] leading-[14px] font-bold text-[#1f4079]">
            <span>VID</span>
            <span>MP3</span>
          </div>
        </main>
        <aside className="flex w-[19px] flex-col items-center bg-[#2c2c2c] pt-[8px] pb-[9px]">
          <Svg box="0 0 13 7" className="h-[7px] w-[13px]"><path d="M0 7l6.500-7L13 7z" fill="#9f9f9f" /></Svg>
          <span className="mt-[8px] h-[412px] w-[11px] rounded-full bg-[#9f9f9f]" />
          <Svg box="0 0 13 7" className="mt-auto h-[7px] w-[13px]"><path d="M0 0l6.500 7L13 0z" fill="#9f9f9f" /></Svg>
        </aside>
      </div>
      <Taskbar />
    </div>
  );
}
